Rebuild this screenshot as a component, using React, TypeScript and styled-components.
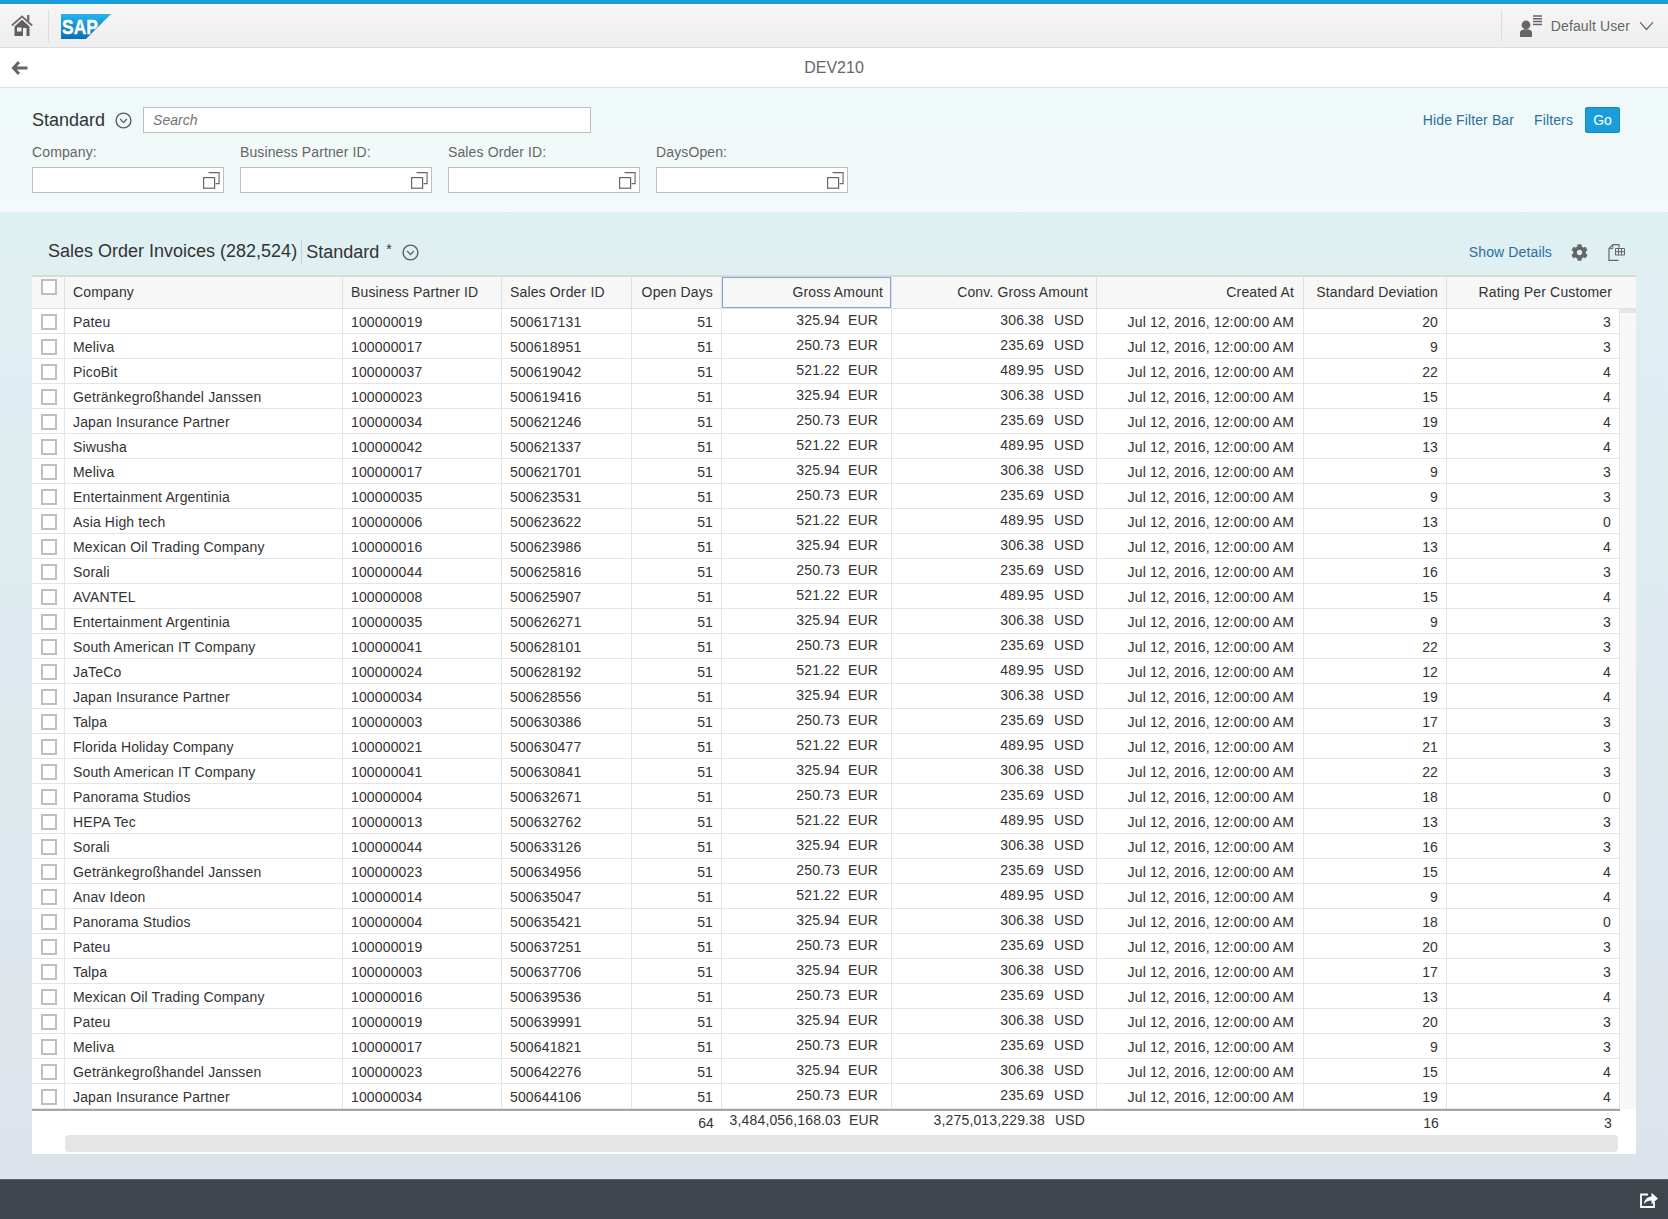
import styled, { createGlobalStyle } from "styled-components";
import { FaCog } from "react-icons/fa";

const GlobalStyle = createGlobalStyle`
  html, body {
    margin: 0;
    height: 100%;
  }
  body {
    font-family: "Liberation Sans", Arial, sans-serif;
    font-size: 14px;
    letter-spacing: 0.12px;
    color: #333333;
  }
  * {
    box-sizing: border-box;
  }
`;

const Page = styled.div`
  display: flex;
  flex-direction: column;
  height: 100vh;
  min-height: 1219px;
`;

const Shell = styled.header`
  display: flex;
  align-items: center;
  height: 48px;
  flex: none;
  border-top: 4px solid #1a9ddb;
  border-bottom: 1px solid #dcdcdc;
  background: linear-gradient(#f6f6f6, #eeeeee);
`;

const HomeButton = styled.div`
  display: flex;
  align-items: center;
  justify-content: center;
  width: 49px;
  height: 32px;
  padding-right: 5px;
  border-right: 1px solid #dddddd;
`;

const Logo = styled.svg`
  display: block;
  width: 50px;
  height: 25px;
  margin-left: 12px;
  margin-top: 1px;
`;

const UserArea = styled.div`
  display: flex;
  align-items: center;
  height: 32px;
  margin-left: auto;
  padding: 0 14px 0 18px;
  border-left: 1px solid #dddddd;
  color: #666666;
`;

const UserName = styled.span`
  margin: 0 9px 0 9px;
`;

const SubHeader = styled.div`
  position: relative;
  display: flex;
  align-items: center;
  justify-content: center;
  flex: none;
  height: 40px;
  background: #ffffff;
  border-bottom: 1px solid #dddddd;
  color: #666666;
  font-size: 16px;
  letter-spacing: 0;
`;

const BackButton = styled.svg`
  position: absolute;
  left: 11px;
  top: 12px;
`;

const FilterBar = styled.section`
  flex: none;
  height: 124px;
  padding: 19px 48px 0 32px;
  background: linear-gradient(#eff9f9, #f3faf9);
`;

const FilterTop = styled.div`
  display: flex;
  align-items: center;
  height: 26px;
`;

const VariantName = styled.span`
  font-size: 18px;
  letter-spacing: 0;
  color: #333333;
`;

const ChevronCircle = styled.svg<{ $gap: number }>`
  display: block;
  flex: none;
  margin-left: ${(p) => p.$gap}px;
`;

const SearchBox = styled.input`
  width: 448px;
  height: 26px;
  margin-left: 11px;
  padding: 0 9px;
  border: 1px solid #bfbfbf;
  background: #ffffff;
  font: italic 14px "Liberation Sans", Arial, sans-serif;
  &::placeholder {
    color: #757575;
    opacity: 1;
  }
`;

const FilterActions = styled.div`
  display: flex;
  align-items: center;
  margin-left: auto;
`;

const LinkText = styled.a<{ $gap?: number }>`
  color: #2b6f9f;
  margin-right: ${(p) => p.$gap ?? 0}px;
  cursor: pointer;
`;

const GoButton = styled.button`
  width: 35px;
  height: 26px;
  padding: 0;
  border: 1px solid #1788c0;
  border-radius: 2px;
  background: #1a9ddb;
  color: #ffffff;
  font: 14px "Liberation Sans", Arial, sans-serif;
`;

const FilterFields = styled.div`
  display: grid;
  grid-template-columns: repeat(4, 192px);
  column-gap: 16px;
  margin-top: 11px;
`;

const FilterLabel = styled.label`
  display: block;
  line-height: 16px;
  margin-bottom: 7px;
  color: #666666;
`;

const ValueHelp = styled.div`
  display: flex;
  align-items: center;
  justify-content: flex-end;
  height: 26px;
  padding-right: 3px;
  border: 1px solid #bfbfbf;
  background: #ffffff;
`;

const Content = styled.main`
  flex: 1;
  padding: 28px 0 0 32px;
  background: linear-gradient(#dff0f3, #dde3ea);
`;

const TableBar = styled.div`
  display: flex;
  align-items: center;
  width: 1604px;
  height: 24px;
  margin-bottom: 11px;
  padding: 0 11px 0 16px;
`;

const TableTitle = styled.span`
  font-size: 18px;
  letter-spacing: 0;
  color: #333333;
  margin-top: -2px;
`;

const VariantBox = styled.div`
  display: flex;
  align-items: center;
  height: 24px;
  margin-left: 4px;
  padding-left: 4px;
  border-left: 1px solid #c8d0d4;
`;

const Star = styled.span`
  font-size: 14px;
  margin: -6px 0 0 7px;
`;

const TableTools = styled.div`
  display: flex;
  align-items: center;
  margin-left: auto;
  color: #666666;
`;

const Panel = styled.div`
  width: 1604px;
  background: #ffffff;
`;

const Grid = styled.table`
  width: 1604px;
  border-collapse: separate;
  border-spacing: 0;
  table-layout: fixed;
  font-size: 14px;
  letter-spacing: 0.15px;
`;

const HeadCell = styled.th<{ $right?: boolean; $focus?: boolean }>`
  height: 34px;
  padding: 0 8px 2px 8px;
  border-top: 2px solid #d9d9d9;
  border-bottom: 1px solid #e0e0e0;
  border-right: 1px solid #e0e0e0;
  background: #f7f7f7;
  color: #333333;
  font-weight: 400;
  text-align: ${(p) => (p.$right ? "right" : "left")};
  white-space: nowrap;
  box-shadow: ${(p) => (p.$focus ? "inset 0 0 0 1px #7aa9d8" : "none")};
`;

const CheckHead = styled(HeadCell)`
  padding: 2px 0 0 9px;
  vertical-align: top;
`;

const Cell = styled.td<{ $right?: boolean; $pad?: number }>`
  height: 25px;
  padding: 1px ${(p) => p.$pad ?? 8}px 0 8px;
  border-bottom: 1px solid #e5e5e5;
  border-right: 1px solid #e5e5e5;
  color: #333333;
  text-align: ${(p) => (p.$right ? "right" : "left")};
  white-space: nowrap;
  overflow: hidden;
`;

const CheckCell = styled(Cell)`
  padding: 5px 0 0 9px;
  vertical-align: top;
`;

const AmountCell = styled(Cell)`
  padding-top: 0;
  padding-bottom: 3px;
`;

const ScrollCell = styled.td`
  padding: 0;
  vertical-align: top;
  background: #f7f7f7;
`;

const ScrollThumb = styled.div`
  height: 4px;
  background: #e5e5e5;
`;

const TotalCell = styled.td<{ $pad?: number; $raised?: boolean }>`
  height: 26px;
  padding: ${(p) => (p.$raised ? "0 0 6px 0" : "0 0 1px 0")};
  padding-right: ${(p) => p.$pad ?? 8}px;
  border-top: 2px solid #a6a6a6;
  text-align: right;
  white-space: nowrap;
  overflow: hidden;
`;

const PlainTotal = styled.td`
  height: 26px;
  padding: 0;
  border-top: 2px solid #ffffff;
`;

const Currency = styled.span<{ $gap: number }>`
  display: inline-block;
  width: 30px;
  margin-left: ${(p) => p.$gap}px;
  text-align: left;
`;

const CheckBox = styled.input.attrs({ type: "checkbox" })`
  appearance: none;
  display: block;
  width: 16px;
  height: 16px;
  margin: 0;
  border: 2px solid #bfbfbf;
  background: #ffffff;
`;

const HScroll = styled.div`
  height: 19px;
  padding: 0 18px 2px 33px;
`;

const HThumb = styled.div`
  height: 17px;
  border-radius: 4px;
  background: #e5e5e5;
`;

const Footer = styled.footer`
  display: flex;
  align-items: center;
  justify-content: flex-end;
  flex: none;
  height: 40px;
  padding: 0 10px 0 0;
  background: #3f454c;
  border-top: 1px solid #5a6066;
`;

const ChevCircleIcon = ({ gap }: { gap: number }) => (
  <ChevronCircle $gap={gap} width="17" height="17" viewBox="0 0 17 17">
    <circle cx="8.5" cy="8.5" r="7.4" fill="none" stroke="#5c5c5c" strokeWidth="1.4" />
    <path d="M5.200 7 8.500 10.600 11.800 7" fill="none" stroke="#5c5c5c" strokeWidth="1.300" />
  </ChevronCircle>
);

const HelpIcon = () => (
  <svg width="17" height="17" viewBox="0 0 17 17">
    <path d="M5.500.6h10.600v11h-3.500" fill="none" stroke="#666" strokeWidth="1.100" />
    <rect x=".6" y="5.600" width="11" height="10.600" fill="none" stroke="#666" strokeWidth="1.200" />
  </svg>
);

type Row = [string, number, number, number, number, number];

const rows: Row[] = [
  ["Pateu", 100000019, 500617131, 325.94, 20, 3],
  ["Meliva", 100000017, 500618951, 250.73, 9, 3],
  ["PicoBit", 100000037, 500619042, 521.22, 22, 4],
  ["Getränkegroßhandel Janssen", 100000023, 500619416, 325.94, 15, 4],
  ["Japan Insurance Partner", 100000034, 500621246, 250.73, 19, 4],
  ["Siwusha", 100000042, 500621337, 521.22, 13, 4],
  ["Meliva", 100000017, 500621701, 325.94, 9, 3],
  ["Entertainment Argentinia", 100000035, 500623531, 250.73, 9, 3],
  ["Asia High tech", 100000006, 500623622, 521.22, 13, 0],
  ["Mexican Oil Trading Company", 100000016, 500623986, 325.94, 13, 4],
  ["Sorali", 100000044, 500625816, 250.73, 16, 3],
  ["AVANTEL", 100000008, 500625907, 521.22, 15, 4],
  ["Entertainment Argentinia", 100000035, 500626271, 325.94, 9, 3],
  ["South American IT Company", 100000041, 500628101, 250.73, 22, 3],
  ["JaTeCo", 100000024, 500628192, 521.22, 12, 4],
  ["Japan Insurance Partner", 100000034, 500628556, 325.94, 19, 4],
  ["Talpa", 100000003, 500630386, 250.73, 17, 3],
  ["Florida Holiday Company", 100000021, 500630477, 521.22, 21, 3],
  ["South American IT Company", 100000041, 500630841, 325.94, 22, 3],
  ["Panorama Studios", 100000004, 500632671, 250.73, 18, 0],
  ["HEPA Tec", 100000013, 500632762, 521.22, 13, 3],
  ["Sorali", 100000044, 500633126, 325.94, 16, 3],
  ["Getränkegroßhandel Janssen", 100000023, 500634956, 250.73, 15, 4],
  ["Anav Ideon", 100000014, 500635047, 521.22, 9, 4],
  ["Panorama Studios", 100000004, 500635421, 325.94, 18, 0],
  ["Pateu", 100000019, 500637251, 250.73, 20, 3],
  ["Talpa", 100000003, 500637706, 325.94, 17, 3],
  ["Mexican Oil Trading Company", 100000016, 500639536, 250.73, 13, 4],
  ["Pateu", 100000019, 500639991, 325.94, 20, 3],
  ["Meliva", 100000017, 500641821, 250.73, 9, 3],
  ["Getränkegroßhandel Janssen", 100000023, 500642276, 325.94, 15, 4],
  ["Japan Insurance Partner", 100000034, 500644106, 250.73, 19, 4],
];

const converted: Record<string, string> = {
  "325.94": "306.38",
  "250.73": "235.69",
  "521.22": "489.95",
};

const widths = [33, 278, 159, 130, 90, 170, 205, 207, 143, 173, 16];
const filters = ["Company:", "Business Partner ID:", "Sales Order ID:", "DaysOpen:"];

const App = () => {
  return (
    <Page>
      <GlobalStyle />
      <Shell>
        <HomeButton>
          <svg width="22" height="21" viewBox="0 0 22 21">
            <path d="M.8 10.500 11 1.500l10.200 9" fill="none" stroke="#6e6e6e" strokeWidth="1.800" />
            <rect x="16" y="0" width="2.400" height="6" fill="#6e6e6e" />
            <path
              d="M3.500 11.500 11 4.800l7.500 6.700V21h-3v-8H12v8H3.500zM6 12.500V16.500h4.500v-4z"
              fill="#5f5f5f"
              fillRule="evenodd"
            />
          </svg>
        </HomeButton>
        <Logo viewBox="0 0 50 25">
          <defs>
            <linearGradient id="sapBlue" x1="0" y1="0" x2="0" y2="1">
              <stop offset="0" stopColor="#25b4ec" />
              <stop offset="1" stopColor="#0a6fb6" />
            </linearGradient>
          </defs>
          <polygon points="0,0 50,0 25,25 0,25" fill="url(#sapBlue)" />
          <text
            x="1"
            y="20"
            fill="#fff"
            stroke="#fff"
            strokeWidth="0.4"
            fontFamily="Liberation Sans, Arial, sans-serif"
            fontWeight="700"
            fontSize="21"
            textLength="36"
            lengthAdjust="spacingAndGlyphs"
          >
            SAP
          </text>
        </Logo>
        <UserArea>
          <svg width="22" height="22" viewBox="0 0 22 22">
            <circle cx="6" cy="10" r="4.400" fill="#666" />
            <path d="M0 22v-4.500c0-2 2-3.300 6-3.300s6 1.300 6 3.300V22z" fill="#666" />
            <path d="M13 1h9M13 3.800h9M13 6.600h9M13 9.400h9" stroke="#666" strokeWidth="1.500" />
          </svg>
          <UserName>Default User</UserName>
          <svg width="15" height="10" viewBox="0 0 15 10">
            <path d="M1 1.200 7.500 8.500 14 1.200" fill="none" stroke="#666" strokeWidth="1.200" />
          </svg>
        </UserArea>
      </Shell>
      <SubHeader>
        <BackButton width="17" height="16" viewBox="0 0 17 16">
          <path d="M8 2 2.500 8 8 14M3 8h13.500" fill="none" stroke="#666" strokeWidth="3" />
        </BackButton>
        DEV210
      </SubHeader>
      <FilterBar>
        <FilterTop>
          <VariantName>Standard</VariantName>
          <ChevCircleIcon gap={10} />
          <SearchBox placeholder="Search" readOnly />
          <FilterActions>
            <LinkText $gap={20}>Hide Filter Bar</LinkText>
            <LinkText $gap={12}>Filters</LinkText>
            <GoButton>Go</GoButton>
          </FilterActions>
        </FilterTop>
        <FilterFields>
          {filters.map((f) => (
            <div key={f}>
              <FilterLabel>{f}</FilterLabel>
              <ValueHelp>
                <HelpIcon />
              </ValueHelp>
            </div>
          ))}
        </FilterFields>
      </FilterBar>
      <Content>
        <TableBar>
          <TableTitle>Sales Order Invoices (282,524)</TableTitle>
          <VariantBox>
            <VariantName>Standard</VariantName>
            <Star>*</Star>
            <ChevCircleIcon gap={10} />
          </VariantBox>
          <TableTools>
            <LinkText $gap={19}>Show Details</LinkText>
            <FaCog size={17} color="#666" style={{ marginRight: 20 }} />
            <svg width="17" height="17" viewBox="0 0 17 17">
              <path d="M4.800.6H11v3M4.800.6 1 4.600v11.800h9.500" fill="none" stroke="#666" strokeWidth="1.200" />
              <path d="M1 4.600h3.800V.6" fill="none" stroke="#666" strokeWidth="1" />
              <path
                d="M7.500 4.500h9v6.500h-9zM10.500 4.500v6.500M13.500 4.500v6.500M7.500 7.700h9"
                fill="none"
                stroke="#666"
                strokeWidth="1"
              />
            </svg>
          </TableTools>
        </TableBar>
        <Panel>
          <Grid>
            <colgroup>
              {widths.map((w, i) => (
                <col key={i} style={{ width: w }} />
              ))}
            </colgroup>
            <thead>
              <tr>
                <CheckHead>
                  <CheckBox readOnly />
                </CheckHead>
                <HeadCell>Company</HeadCell>
                <HeadCell>Business Partner ID</HeadCell>
                <HeadCell>Sales Order ID</HeadCell>
                <HeadCell $right>Open Days</HeadCell>
                <HeadCell $right $focus>
                  Gross Amount
                </HeadCell>
                <HeadCell $right>Conv. Gross Amount</HeadCell>
                <HeadCell $right style={{ paddingRight: 9 }}>
                  Created At
                </HeadCell>
                <HeadCell $right>Standard Deviation</HeadCell>
                <HeadCell $right colSpan={2} style={{ paddingRight: 24, borderRight: 0 }}>
                  Rating Per Customer
                </HeadCell>
              </tr>
            </thead>
            <tbody>
              {rows.map((r, i) => (
                <tr key={r[2]}>
                  <CheckCell>
                    <CheckBox readOnly />
                  </CheckCell>
                  <Cell>{r[0]}</Cell>
                  <Cell>{r[1]}</Cell>
                  <Cell>{r[2]}</Cell>
                  <Cell $right>51</Cell>
                  <AmountCell $right $pad={13}>
                    {r[3].toFixed(2)}
                    <Currency $gap={8}>EUR</Currency>
                  </AmountCell>
                  <AmountCell $right $pad={12}>
                    {converted[r[3].toFixed(2)]}
                    <Currency $gap={10}>USD</Currency>
                  </AmountCell>
                  <Cell $right $pad={9}>
                    Jul 12, 2016, 12:00:00 AM
                  </Cell>
                  <Cell $right>{r[4]}</Cell>
                  <Cell $right>{r[5]}</Cell>
                  {i === 0 && (
                    <ScrollCell rowSpan={rows.length}>
                      <ScrollThumb />
                    </ScrollCell>
                  )}
                </tr>
              ))}
              <tr>
                <TotalCell colSpan={5}>64</TotalCell>
                <TotalCell $raised $pad={13}>
                  3,484,056,168.03
                  <Currency $gap={8}>EUR</Currency>
                </TotalCell>
                <TotalCell $raised $pad={12}>
                  3,275,013,229.38
                  <Currency $gap={10}>USD</Currency>
                </TotalCell>
                <TotalCell />
                <TotalCell>16</TotalCell>
                <TotalCell>3</TotalCell>
                <PlainTotal />
              </tr>
            </tbody>
          </Grid>
          <HScroll>
            <HThumb />
          </HScroll>
        </Panel>
      </Content>
      <Footer>
        <svg width="18" height="16" viewBox="0 0 18 16">
          <path d="M8 2.500H1v12.500h13v-5" fill="none" stroke="#fff" strokeWidth="1.800" />
          <path d="M4 12c.4-4.600 3.400-7.300 7.500-7.300V.8L18 6.500l-6.500 5.700V8.500C8.500 8.500 6 9.500 4 12z" fill="#fff" />
        </svg>
      </Footer>
    </Page>
  );
};

export default App;
